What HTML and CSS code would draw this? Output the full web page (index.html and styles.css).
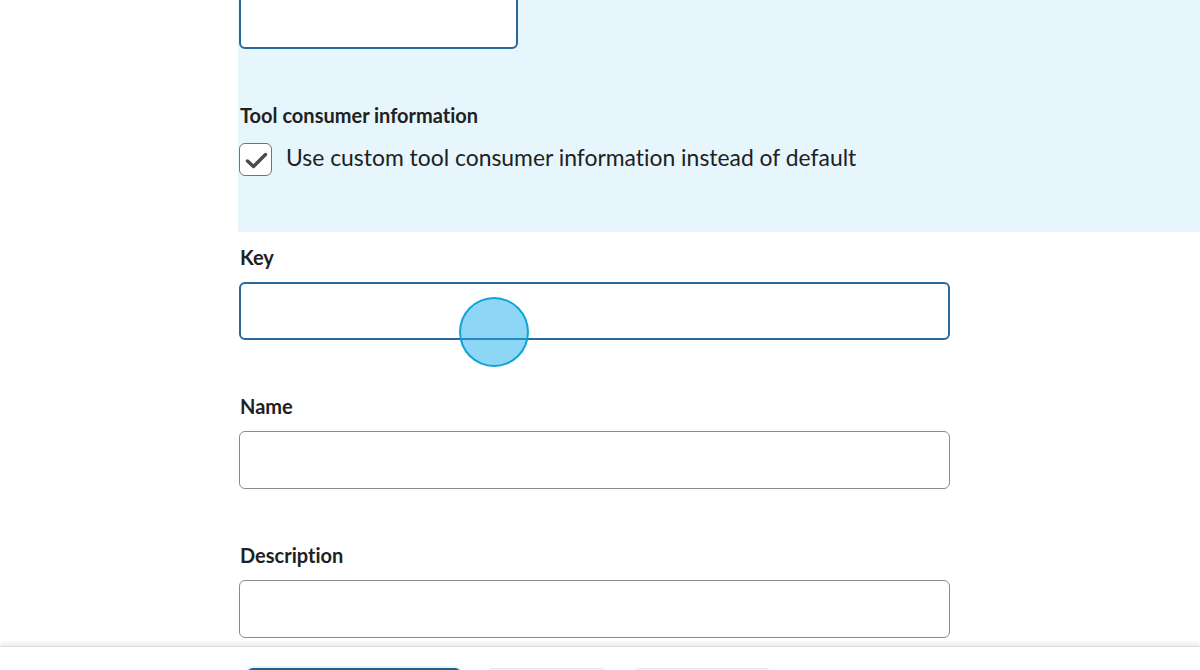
FILE: index.html
```html
<!DOCTYPE html>
<html lang="en">
<head>
<meta charset="utf-8">
<title>Tool consumer information</title>
<link rel="stylesheet" href="styles.css">
</head>
<body>
<div class="page">
  <section class="panel">
    <div class="input input-focus input-short"></div>
    <h3 class="field-label panel-heading">Tool consumer information</h3>
    <label class="check-row">
      <span class="checkbox">
        <svg width="32" height="32" viewBox="0 0 32 32" aria-hidden="true">
          <path d="M7.5 17 L13.5 22.5 L25.5 10.5" fill="none" stroke="#494c4e" stroke-width="3.4" stroke-linecap="round" stroke-linejoin="round"/>
        </svg>
      </span>
      <span class="check-text">Use custom tool consumer information instead of default</span>
    </label>
  </section>

  <div class="field field-first">
    <div class="field-label">Key</div>
    <div class="input-wrap">
      <div class="input input-focus"></div>
      <span class="touch"></span>
    </div>
  </div>

  <div class="field">
    <div class="field-label">Name</div>
    <div class="input"></div>
  </div>

  <div class="field">
    <div class="field-label">Description</div>
    <div class="input"></div>
  </div>
</div>

<footer class="footer">
  <span class="btn btn-primary"></span>
  <span class="btn btn-save"></span>
  <span class="btn btn-cancel"></span>
</footer>
</body>
</html>
```

FILE: styles.css
```css
html, body {
  margin: 0;
  padding: 0;
  height: 670px;
  overflow: hidden;
  background: #ffffff;
  font-family: Lato, "Noto Sans", sans-serif;
  font-variant-ligatures: none;
  color: #202122;
}

.page {
  padding-left: 238px;
}

.panel {
  background: #e6f6fc;
  height: 232px;
  box-sizing: border-box;
  padding-left: 1px;
  display: flex;
  flex-direction: column;
  align-items: flex-start;
}

.input {
  box-sizing: border-box;
  width: 711px;
  height: 58px;
  background: #ffffff;
  border: 1px solid #878c90;
  border-radius: 6px;
}

.input-focus {
  border: 2px solid #2a679b;
}

.input-short {
  width: 279px;
  height: 59px;
  margin-top: -10px;
}

.field-label {
  margin: 0;
  padding-left: 1px;
  font-size: 20px;
  font-weight: 700;
  line-height: 24px;
  height: 24px;
  color: #202122;
}

.panel-heading {
  margin-top: 54px;
}

.check-row {
  display: flex;
  align-items: flex-start;
  margin-top: 16px;
  gap: 14px;
}

.checkbox {
  box-sizing: border-box;
  width: 33px;
  height: 33px;
  border: 1.5px solid #6f7477;
  border-radius: 6px;
  background: #ffffff;
  display: flex;
  align-items: center;
  justify-content: center;
}

.checkbox svg {
  display: block;
  flex: none;
}

.check-text {
  font-size: 22.9px;
  line-height: 28px;
  color: #202122;
}

.field {
  padding-left: 1px;
  margin-top: 54px;
}

.field-first {
  margin-top: 13px;
}

.field .field-label {
  margin-bottom: 13px;
}

.input-wrap {
  position: relative;
  width: 711px;
}

.touch {
  position: absolute;
  left: 220px;
  top: 15px;
  width: 70px;
  height: 70px;
  box-sizing: border-box;
  border-radius: 50%;
  background: rgba(28, 174, 236, 0.5);
  border: 2.5px solid rgba(10, 162, 214, 0.95);
}

.footer {
  position: fixed;
  left: 0;
  right: 0;
  top: 646px;
  height: 40px;
  background: #ffffff;
  border-top: 1px solid #dcdcdc;
  box-shadow: 0 -3px 4px rgba(0, 0, 0, 0.08);
  display: flex;
  padding-left: 247px;
  padding-top: 21px;
  box-sizing: border-box;
}

.btn {
  display: block;
  height: 30px;
  box-sizing: border-box;
  border-radius: 6px;
  background: #f1f5fb;
  border: 1px solid #e0e6ee;
}

.btn-primary {
  width: 214px;
  background: #006fbf;
  border: 2px solid #2a5e88;
  box-shadow: 0 0 0 2px #e3f6ff;
}

.btn-save {
  width: 120px;
  margin-left: 26px;
}

.btn-cancel {
  width: 137px;
  margin-left: 27px;
}
```
